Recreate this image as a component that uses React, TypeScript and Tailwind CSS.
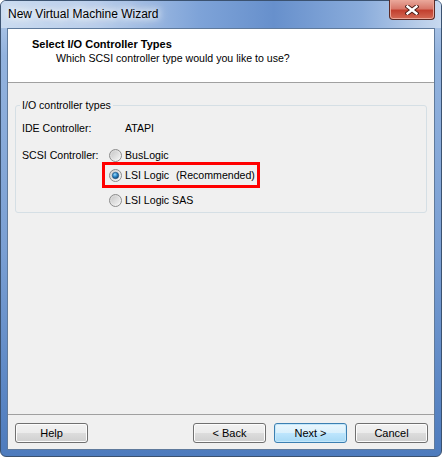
import React from "react";

const ui = { fontFamily: '"Liberation Sans", Arial, sans-serif' };

function Radio({ checked }: { checked?: boolean }) {
  return (
    <svg width="13" height="13" viewBox="0 0 13 13" className="shrink-0">
      <defs>
        <linearGradient id="rOut" x1="0" y1="0" x2="1" y2="1">
          <stop offset="0" stopColor="#d0d0d0" />
          <stop offset="1" stopColor="#fafafa" />
        </linearGradient>
        <linearGradient id="rIn" x1="0" y1="0" x2="1" y2="1">
          <stop offset="0" stopColor="#c9c9c9" />
          <stop offset="1" stopColor="#f2f2f2" />
        </linearGradient>
        <radialGradient id="rDot" cx="0.4" cy="0.35" r="0.7">
          <stop offset="0" stopColor="#9fdcfb" />
          <stop offset="0.5" stopColor="#2a86c9" />
          <stop offset="1" stopColor="#0d3e6b" />
        </radialGradient>
      </defs>
      <circle cx="6.5" cy="6.5" r="6" fill="url(#rOut)" stroke="#8c8c8c" />
      <circle cx="6.5" cy="6.5" r="4.3" fill="url(#rIn)" />
      {checked && <circle cx="6.5" cy="6.5" r="3.2" fill="url(#rDot)" stroke="#1f4f78" strokeWidth="0.6" />}
    </svg>
  );
}

function Btn({ label, primary }: { label: string; primary?: boolean }) {
  return (
    <button
      className={
        primary
          ? "w-[73px] h-[20px] rounded-[3px] border border-[#3c7fb1] bg-[linear-gradient(to_bottom,#eaf6fd,#d9f0fc_50%,#bee6fd_50%,#a7d9f5)] text-[11px] text-black shadow-[inset_0_0_0_1px_#c4e7fa]"
          : "w-[73px] h-[20px] rounded-[3px] border border-[#707070] bg-[linear-gradient(to_bottom,#f2f2f2,#ebebeb_50%,#dddddd_50%,#cfcfcf)] text-[11px] text-black shadow-[inset_0_0_0_1px_#fcfcfc]"
      }
      style={ui}
    >
      {label}
    </button>
  );
}

export default function App() {
  return (
    <div
      className="w-[442px] h-[457px] flex flex-col rounded-[6px] border border-[#3b5270] bg-[linear-gradient(to_bottom,#b9cfeb,#93b3de_12%,#7a9fd3_55%,#4d7bbd)]"
      style={ui}
    >
      {/* title bar */}
      <div className="h-[27px] flex justify-between items-start rounded-t-[5px] bg-[linear-gradient(to_right,#cadbf0,#b8cdea_22%,#7ea3d8_45%,#6790cc_62%,#8aacdb_82%,#b8cde9_95%,#c8d9ef)]">
        <span className="pl-[7px] pt-[6px] text-[12px] leading-[15px] text-black [text-shadow:0_0_6px_#fff,0_0_10px_#fff,0_0_14px_#eef4fb]">
          New Virtual Machine Wizard
        </span>
        <div className="-mt-[1px] mr-[6px] w-[46px] h-[20px] rounded-b-[4px] border border-[#5b2a24] border-t-0 bg-[linear-gradient(to_bottom,#e9a99c,#d8786a_45%,#c2402f_55%,#d36a55)] flex items-center justify-center shadow-[inset_0_0_0_1px_#eba597]">
          <svg width="14" height="10" viewBox="0 0 14 10">
            <path d="M2.5 1.5 L11.5 8.5 M11.5 1.5 L2.5 8.5" stroke="#4a1a14" strokeWidth="4.2" strokeLinecap="square" />
            <path d="M2.5 1.5 L11.5 8.5 M11.5 1.5 L2.5 8.5" stroke="#ffffff" strokeWidth="2.4" strokeLinecap="square" />
          </svg>
        </div>
      </div>

      {/* client area */}
      <div className="flex-1 mx-[6px] mb-[6px] border border-[#5f7a9c] bg-[#f0f0f0] flex flex-col">
        <div className="h-[54px] bg-white border-b border-[#a0a0a0] pt-[8px]">
          <p className="pl-[24px] text-[11px] leading-[14px] font-bold text-black">Select I/O Controller Types</p>
          <p className="pl-[48px] text-[10.6px] leading-[14px] text-black">Which SCSI controller type would you like to use?</p>
        </div>

        <fieldset className="mx-[7px] mt-[15px] px-[4px] pb-[5px] border border-[#d5dfe5] rounded-[3px] text-[10.6px] text-black">
          <legend className="px-[2px] leading-[14px]">I/O controller types</legend>
          <div className="pl-[2px]">
            <div className="mt-[9px] flex h-[14px] items-center leading-[14px]">
              <span className="w-[103px]">IDE Controller:</span>
              <span>ATAPI</span>
            </div>
            <div className="mt-[13px] flex">
              <span className="w-[87px] h-[14px] leading-[14px]">SCSI Controller:</span>
              <div className="flex flex-col">
                <label className="h-[14px] flex items-center gap-[3px] leading-[14px]">
                  <Radio />
                  <span>BusLogic</span>
                </label>
                <label className="-ml-[7px] w-[158px] h-[26px] border-[3px] border-[#ff0000] pl-[4px] flex items-center gap-[3px] leading-[14px]">
                  <Radio checked />
                  <span className="w-[48px] shrink-0">LSI Logic</span>
                  <span className="whitespace-nowrap">(Recommended)</span>
                </label>
                <label className="mt-[5px] h-[14px] flex items-center gap-[3px] leading-[14px]">
                  <Radio />
                  <span>LSI Logic SAS</span>
                </label>
              </div>
            </div>
          </div>
        </fieldset>

        <div className="flex-1" />

        <div className="border-t border-[#a0a0a0] pt-[8px] pb-[6px] pl-[7px] pr-[6px] flex items-center">
          <Btn label="Help" />
          <div className="flex-1" />
          <div className="flex gap-[8px]">
            <Btn label="< Back" />
            <Btn label="Next >" primary />
            <Btn label="Cancel" />
          </div>
        </div>
      </div>
    </div>
  );
}
